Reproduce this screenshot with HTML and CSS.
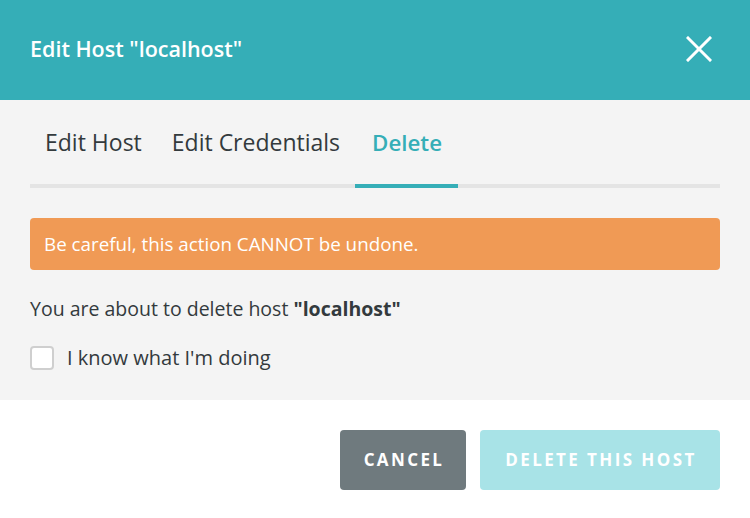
FILE: index.html
```html
<!DOCTYPE html>
<html>
<head>
<meta charset="utf-8">
<link rel="stylesheet" href="styles.css">
</head>
<body>
<div class="modal">
  <header class="head">
    <h1 class="title">Edit Host "localhost"</h1>
    <svg class="close" width="26" height="26" viewBox="0 0 26 26"><path d="M2 2 L24 24 M24 2 L2 24" stroke="#fff" stroke-width="3" stroke-linecap="square"/></svg>
  </header>
  <section class="body">
    <nav class="tabs">
      <span class="tab">Edit Host</span>
      <span class="tab">Edit Credentials</span>
      <span class="tab active">Delete</span>
    </nav>
    <div class="alert">Be careful, this action CANNOT be undone.</div>
    <p class="msg">You are about to delete host <b>"localhost"</b></p>
    <label class="check"><span class="box"></span>I know what I'm doing</label>
  </section>
  <footer class="foot">
    <button class="btn cancel">CANCEL</button>
    <button class="btn del">DELETE THIS HOST</button>
  </footer>
</div>
</body>
</html>
```
FILE: styles.css
```css
* { box-sizing: border-box; }
html, body { margin: 0; padding: 0; }
body { width: 750px; height: 518px; font-family: "Open Sans", "Lato", sans-serif; color: #333a3d; background: #fff; }
.modal { display: flex; flex-direction: column; height: 518px; }
.head { height: 100px; background: #35aeb7; display: flex; align-items: center; justify-content: space-between; padding: 0 38px 2px 30px; }
.title { margin: 0; color: #fff; font-size: 21.5px; font-weight: 600; line-height: 28px; }
.close { display: block; }
.body { background: #f4f4f4; height: 300px; padding: 0 30px; }
.tabs { display: flex; height: 88px; border-bottom: 4px solid #e4e4e4; }
.tab { font-size: 23px; padding: 0 15px; display: flex; align-items: center; height: 88px; margin-bottom: -4px; border-bottom: 4px solid transparent; color: #333a3d; }
.tab.active { color: #35aeb7; font-weight: 600; font-size: 22.3px; border-bottom-color: #35aeb7; padding: 0 16px 0 17px; }
.alert { margin-top: 30px; height: 52px; background: #f09a55; border-radius: 4px; color: #fff; font-size: 18.8px; padding: 0 14px; display: flex; align-items: center; }
.msg { margin: 27px 0 0; font-size: 19.5px; line-height: 24px; }
.msg b { font-weight: 700; }
.check { display: flex; align-items: center; margin-top: 25px; font-size: 20px; line-height: 24px; }
.box { width: 24px; height: 24px; border: 2px solid #cfcfcf; border-radius: 4px; background: #fff; margin-right: 13px; flex: none; }
.foot { flex: 1; display: flex; justify-content: flex-end; align-items: flex-start; gap: 14px; padding: 30px 30px 0; background: #fff; }
.btn { height: 60px; border: 0; border-radius: 4px; color: #fff; font-family: inherit; font-size: 17px; font-weight: 700; letter-spacing: 2.4px; padding: 0 0 2px 2px; }
.cancel { background: #6f7a7e; width: 126px; }
.del { background: #a8e3e7; width: 240px; }
```
